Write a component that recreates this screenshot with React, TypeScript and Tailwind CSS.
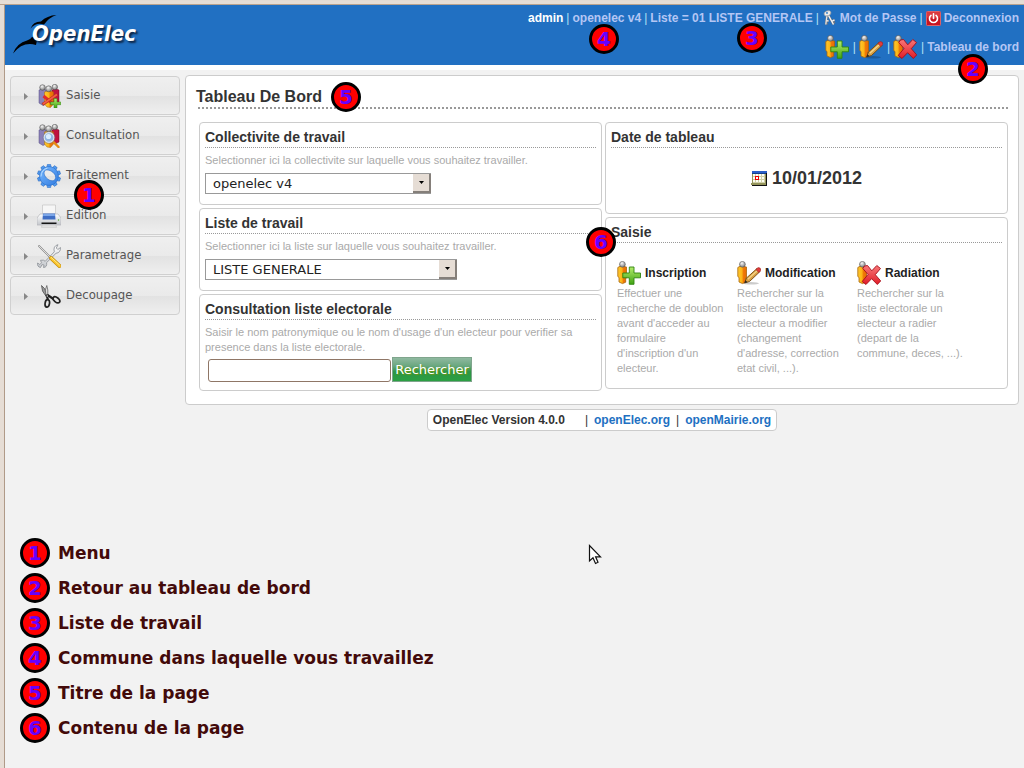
import type { ReactNode } from "react";

const sans = "font-['Liberation_Sans',Arial,sans-serif]";
const dejavu = "font-['DejaVu_Sans',Verdana,sans-serif]";
const condensed = "font-['DejaVu_Sans_Condensed','DejaVu_Sans',sans-serif]";

function Marker({ n, className = "" }: { n: number; className?: string }) {
  return (
    <span
      className={`flex size-[30px] shrink-0 items-center justify-center rounded-full border-[3px] border-black bg-[#ff0000] text-xl leading-none font-bold text-[#6600ff] ${dejavu} ${className}`}
    >
      {n}
    </span>
  );
}

/* ---------- icons ---------- */

function Gradients() {
  return (
    <svg className="absolute size-0" aria-hidden="true">
      <defs>
        <linearGradient id="gold" x1="0" x2="1" y1="0" y2="0">
          <stop offset="0" stopColor="#ffc830" />
          <stop offset="0.5" stopColor="#fbb414" />
          <stop offset="0.6" stopColor="#f07c08" />
          <stop offset="1" stopColor="#e86a04" />
        </linearGradient>
        <radialGradient id="head" cx="0.4" cy="0.3" r="0.8">
          <stop offset="0" stopColor="#f8f8f8" />
          <stop offset="1" stopColor="#6f6f6f" />
        </radialGradient>
        <linearGradient id="green" x1="0" x2="0" y1="0" y2="1">
          <stop offset="0" stopColor="#b4ec6c" />
          <stop offset="1" stopColor="#3fa312" />
        </linearGradient>
        <linearGradient id="red" x1="0" x2="0" y1="0" y2="1">
          <stop offset="0" stopColor="#f87878" />
          <stop offset="1" stopColor="#e01c28" />
        </linearGradient>
        <linearGradient id="blue" x1="0" x2="1" y1="0" y2="1">
          <stop offset="0" stopColor="#7dbcff" />
          <stop offset="1" stopColor="#2f7ae0" />
        </linearGradient>
        <linearGradient id="metal" x1="0" x2="0" y1="0" y2="1">
          <stop offset="0" stopColor="#ffffff" />
          <stop offset="1" stopColor="#c4c7cc" />
        </linearGradient>
      </defs>
    </svg>
  );
}

function Person() {
  return (
    <g>
      <path
        d="M0.800 6.500 L3.500 5 L9.500 6 V17 H8.700 V21.200 L5.500 22.600 L2 21 V16.500 L0.800 15.500 Z"
        fill="url(#gold)"
        stroke="#a8660a"
        strokeWidth="0.8"
      />
      <circle cx="5.400" cy="3.300" r="2.900" fill="url(#head)" stroke="#555" strokeWidth="0.6" />
    </g>
  );
}

function PersonAdd() {
  return (
    <svg className="inline-block size-6" viewBox="0 0 24 24" aria-hidden="true">
      <Person />
      <path
        d="M12.300 6 H17 V12 H23.500 V16.800 H17 V23.300 H12.300 V16.800 H5.800 V12 H12.300 Z"
        fill="url(#green)"
        stroke="#2f8410"
        strokeWidth="0.9"
      />
    </svg>
  );
}

function PersonEdit() {
  return (
    <svg className="inline-block size-6" viewBox="0 0 24 24" aria-hidden="true">
      <ellipse cx="14" cy="22.300" rx="8" ry="1.200" fill="#000" opacity="0.2" />
      <Person />
      <path d="M7.500 22 L9.500 17 L20 7.500 L23 10.500 L12.500 20.500 Z" fill="#d8a044" stroke="#74470f" strokeWidth="0.9" />
      <path d="M10.800 18.300 L21 9" stroke="#f6d78c" strokeWidth="1.200" />
      <path d="M7.500 22 L8.500 19.300 L10.500 21.200 Z" fill="#222" />
      <path d="M18.900 8.600 L21 6.600 Q23.900 6.200 23.900 9.500 L21.900 11.500 Z" fill="#e23b3b" stroke="#8d1a1a" strokeWidth="0.5" />
    </svg>
  );
}

function PersonRemove() {
  return (
    <svg className="inline-block size-6" viewBox="0 0 24 24" aria-hidden="true">
      <Person />
      <path
        d="M7.500 5 L10.500 4.500 L14.800 9.800 L19.800 4.500 L23.500 7.500 L18.300 13.700 L23.700 19.900 L20.300 23.500 L14.600 17.700 L9 23.500 L5.200 20.500 L11 13.500 L5.800 7.500 Z"
        fill="url(#red)"
        stroke="#a60c18"
        strokeWidth="0.9"
      />
    </svg>
  );
}

function People() {
  return (
    <g strokeWidth="0.5">
      <path d="M2 6 L6 4.500 L9 6 V20 L6 21.500 L2 19 Z" fill="#8a80b8" stroke="#554c80" />
      <path d="M15 6 L18 4.500 L22 6 V18 L18 20 L15 18 Z" fill="#c0123f" stroke="#6e0a26" />
      <path d="M7.500 8 L12 6.500 L16.500 8 V20 L13.500 23.500 L10 23 L7.500 20 Z" fill="url(#gold)" stroke="#a8660a" />
      <circle cx="5.500" cy="3.500" r="2.800" fill="url(#head)" stroke="#444" />
      <circle cx="17.800" cy="3" r="2.700" fill="url(#head)" stroke="#444" />
      <circle cx="11.700" cy="4.800" r="3" fill="url(#head)" stroke="#444" />
    </g>
  );
}

function EntryIcon() {
  return (
    <svg className="size-6" viewBox="0 0 24 24" aria-hidden="true">
      <People />
      <path d="M6.500 12 L16 20" stroke="#e02a2a" strokeWidth="3" />
      <path d="M5.500 20.500 L20 10.500" stroke="#b83020" strokeWidth="3.200" />
      <path d="M6 20 L20 10.500" stroke="#f45c44" strokeWidth="1.800" />
      <path d="M17 14.500 H20 V18 H23.800 V20.700 H20 V24 H17 V20.700 H13.500 V18 H17 Z" fill="url(#green)" stroke="#2f8410" strokeWidth="0.500" />
    </svg>
  );
}

function SearchPeopleIcon() {
  return (
    <svg className="size-6" viewBox="0 0 24 24" aria-hidden="true">
      <People />
      <path d="M16.500 18 L21.500 23" stroke="#e58b14" strokeWidth="2.400" strokeLinecap="round" />
      <circle cx="12" cy="13.500" r="5" fill="#8fb6e4" stroke="#e0e6ee" strokeWidth="1.300" />
      <circle cx="11.500" cy="12.500" r="2.600" fill="#dceeff" />
      <circle cx="12" cy="13.500" r="5.900" fill="none" stroke="#687080" strokeWidth="0.500" />
    </svg>
  );
}

function GearIcon() {
  const teeth = [0, 36, 72, 108, 144, 180, 216, 252, 288, 324];
  return (
    <svg className="size-6" viewBox="0 0 24 24" aria-hidden="true">
      <g stroke="#2a6cc4" strokeWidth="0.600">
        {teeth.map((a) => (
          <path key={a} fill="#4f9af0" d="M9.800 4 L10.400 0.400 H13.600 L14.200 4 Z" transform={`rotate(${a} 12 12)`} />
        ))}
        <path
          fillRule="evenodd"
          fill="url(#blue)"
          d="M12 2.600 A9.400 9.400 0 1 1 11.900 2.600 Z M8.600 6.200 C11.500 4.800 18.800 8.500 18.600 13.500 C18.300 18 13 17.500 9.500 14 C7 11.500 6 8 8.600 6.200 Z"
        />
      </g>
      <path d="M4 12.500 Q4.200 5.800 10.500 4" stroke="#b8dcff" strokeWidth="1" fill="none" />
    </svg>
  );
}

function PrinterIcon() {
  return (
    <svg className="size-6" viewBox="0 0 24 24" aria-hidden="true">
      <path d="M5.500 1 H18.500 V11 H5.500 Z" fill="#f6f6f6" stroke="#c4c4c4" strokeWidth="0.700" />
      <path d="M3 10 H21 L24 14 V21 H0 V14 Z" fill="url(#metal)" stroke="#b4b6ba" strokeWidth="0.700" />
      <path d="M6 9.500 H18 L18.500 15.500 H5.500 Z" fill="#3f6ec4" />
      <path d="M6.300 10 H17.700 L17.900 12 H6 Z" fill="#7ba6e8" />
      <path d="M4.500 18.500 H19.500 V20 H4.500 Z" fill="#151515" />
      <path d="M5 21 H19 L19.500 23.300 H4.500 Z" fill="#e4e4e4" stroke="#bbb" strokeWidth="0.500" />
      <circle cx="21.500" cy="16" r="0.700" fill="#55b030" />
    </svg>
  );
}

function ToolsIcon() {
  return (
    <svg className="size-6" viewBox="0 0 24 24" fill="none" aria-hidden="true">
      <path
        d="M3.500 23.500 Q0 22.800 0.600 19 L2.800 20.500 L4.500 18.800 L3.500 16.300 Q7 15.500 8.200 17.300 L17.300 7.800 Q15.800 2 21 0.700 L19.300 4 L20.800 5.500 L23.500 3.500 Q23.700 8.800 19 9.300 L9.600 18.600 Q10.300 23.300 6.500 23.500 L7 21 L5 20.600 Z"
        fill="url(#metal)"
        stroke="#93979d"
        strokeWidth="0.900"
      />
      <path d="M2 2 L13 13" stroke="#8a8a8a" strokeWidth="1.800" strokeLinecap="round" />
      <path d="M2 2 L13 13" stroke="#f2f2f2" strokeWidth="0.800" strokeLinecap="round" />
      <path d="M14 14 L22.500 22" stroke="#c08a08" strokeWidth="3.800" strokeLinecap="round" />
      <path d="M14 14 L22.500 22" stroke="#fbc52c" strokeWidth="2.600" strokeLinecap="round" />
      <path d="M14.300 13.500 L22.500 21" stroke="#fff0a0" strokeWidth="0.800" strokeLinecap="round" />
    </svg>
  );
}

function ScissorsIcon() {
  return (
    <svg className="size-6" viewBox="0 0 24 24" fill="none" aria-hidden="true">
      <path d="M4.500 1.500 L7.500 4.500 L11 12 L9.500 13 L5.500 7 Z" fill="#999" stroke="#444" strokeWidth="0.700" />
      <path d="M9.800 1.500 L10.800 6 L10.800 12.500 L9 12 L8.300 6 Z" fill="#ddd" stroke="#555" strokeWidth="0.700" />
      <path d="M9.500 10.500 L11 16 M10.500 11 L16.500 15" stroke="#222" strokeWidth="2.200" />
      <ellipse cx="10.300" cy="19.400" rx="2.200" ry="3.700" transform="rotate(8 10.300 19.400)" stroke="#222" strokeWidth="1.700" />
      <ellipse cx="19.400" cy="15.800" rx="2.300" ry="3.900" transform="rotate(-52 19.400 15.800)" stroke="#222" strokeWidth="1.700" />
      <circle cx="10.300" cy="12" r="0.800" fill="#ddd" />
    </svg>
  );
}

function KeysIcon() {
  return (
    <svg className="size-4" viewBox="0 0 16 16" fill="none" aria-hidden="true">
      <path d="M6 4.500 L11.500 14.500 M9.500 11.500 L12.500 9.800 M10.500 13.500 L13 12" stroke="#6c7480" strokeWidth="2.200" />
      <path d="M5 5 L3.800 14.500 M4 10.500 L6.800 11 M4 13.300 L6 13.500" stroke="#6c7480" strokeWidth="2.200" />
      <path d="M6 4.500 L11.500 14.500 M9.500 11.500 L12.500 9.800" stroke="#f4f4f4" strokeWidth="1.400" />
      <path d="M5 5 L3.800 14.500 M4 10.500 L6.500 11" stroke="#e4e4e4" strokeWidth="1.300" />
      <ellipse cx="5.500" cy="3.300" rx="3.600" ry="2.500" transform="rotate(-20 5.500 3.300)" fill="#ececec" stroke="#8a8f98" strokeWidth="0.700" />
      <circle cx="5" cy="2.900" r="0.900" fill="#2170c2" />
    </svg>
  );
}

function PowerIcon() {
  return (
    <svg className="size-[15px]" viewBox="0 0 16 16" fill="none" aria-hidden="true">
      <rect x="0.500" y="0.500" width="15" height="15" rx="1" fill="#c81420" stroke="#e86468" />
      <path d="M1 1 H15 V7 Q8 9 1 7 Z" fill="#e2484c" opacity="0.700" />
      <path d="M5.300 4.700 A4.300 4.300 0 1 0 10.700 4.700 M8 3 V8" stroke="#fff" strokeWidth="1.700" strokeLinecap="round" />
    </svg>
  );
}

function CalendarIcon() {
  return (
    <svg className="h-[15px] w-4" viewBox="0 0 16 15" shapeRendering="crispEdges" aria-hidden="true">
      <path d="M1 1 H16 V15 H1 Z" fill="#111" />
      <path d="M1 1 H15 V14 H0 V12 H1 Z" fill="#94945a" />
      <path d="M1 0 H16 V2 H1 Z" fill="#2a5fc8" />
      <path d="M1 2 H15 V3 H1 Z" fill="#16408c" />
      <path d="M2 3 H14 V12 H2 Z" fill="#d0d0a8" />
      <path
        d="M2 3 H4 V5 H2 Z M5 3 H7 V5 H5 Z M8 3 H10 V5 H8 Z M11 3 H13 V5 H11 Z M2 6 H4 V8 H2 Z M8 6 H10 V8 H8 Z M11 6 H13 V8 H11 Z M2 9 H4 V11 H2 Z M5 9 H7 V11 H5 Z M8 9 H10 V11 H8 Z M11 9 H13 V11 H11 Z"
        fill="#fffff4"
      />
      <path d="M4 5 H8 V9 H4 Z" fill="#f00000" />
      <path d="M5 6 H7 V8 H5 Z" fill="#fff" />
    </svg>
  );
}

function Pointer() {
  return (
    <svg className="absolute top-[544px] left-[588px] h-[21px] w-[14px]" viewBox="0 0 14 21" aria-hidden="true">
      <path d="M1.500 1.500 V17 L5 13.800 L7.500 19.500 L10 18.300 L7.600 12.800 H12.500 Z" fill="#fff" stroke="#111" strokeWidth="1.200" />
    </svg>
  );
}

function Logo() {
  return (
    <a href="#accueil" className="relative mt-[5px] ml-[7px] block h-11 w-32">
      <svg className="absolute inset-0 h-11 w-14" viewBox="0 0 56 44" aria-hidden="true">
        <path d="M18.500 18.500 Q21 11.500 29 11.500 Q35 5.500 44.500 5 Q37 7.500 32 14.500 Q24 12 18.500 18.500 Z" fill="#000" />
        <path d="M1 43.500 Q5 33 15 30.500 Q18 30 20 27 L26 26 L24 35 Q11 31 1 43.500 Z" fill="#000" />
      </svg>
      <span
        className={`absolute top-3 left-5 text-[22px] leading-6 font-bold text-white italic [text-shadow:2px_2px_2px_#0c2444] ${condensed}`}
      >
        OpenElec
      </span>
    </a>
  );
}

/* ---------- page parts ---------- */

function Bar() {
  return <span className="font-normal text-[#b4e2f4]">|</span>;
}

function Header() {
  return (
    <header className="relative flex h-[65px] justify-between border-b-[5px] border-white bg-[#2170c2]">
      <Logo />
      <div className={`flex flex-col items-end pr-[5px] text-xs font-bold text-[#b4c6f4] ${sans}`}>
        <div className="flex h-[26px] items-center gap-[3px] whitespace-nowrap">
          <span className="text-white">admin</span>
          <Bar />
          <a href="#commune">openelec v4</a>
          <Bar />
          <a href="#liste-de-travail">Liste = 01 LISTE GENERALE</a>
          <Bar />
          <a href="#mot-de-passe" className="flex items-center gap-[2px]">
            <KeysIcon />
            Mot de Passe
          </a>
          <Bar />
          <a href="#deconnexion" className="flex items-center gap-[3px]">
            <PowerIcon />
            Deconnexion
          </a>
        </div>
        <nav className="mt-1 flex h-6 items-center gap-[3px] whitespace-nowrap" aria-label="Raccourcis">
          <a href="#inscription" aria-label="Inscription" className="mr-px flex">
            <PersonAdd />
          </a>
          <Bar />
          <a href="#modification" aria-label="Modification" className="mr-px flex">
            <PersonEdit />
          </a>
          <Bar />
          <a href="#radiation" aria-label="Radiation" className="mr-px flex">
            <PersonRemove />
          </a>
          <Bar />
          <a href="#tableau-de-bord">Tableau de bord</a>
        </nav>
      </div>
      <Marker n={4} className="absolute top-[19px] right-[405px]" />
      <Marker n={3} className="absolute top-[18px] right-[257px]" />
      <Marker n={2} className="absolute top-[49px] right-[36px]" />
    </header>
  );
}

const menu: { label: string; icon: ReactNode }[] = [
  { label: "Saisie", icon: <EntryIcon /> },
  { label: "Consultation", icon: <SearchPeopleIcon /> },
  { label: "Traitement", icon: <GearIcon /> },
  { label: "Edition", icon: <PrinterIcon /> },
  { label: "Parametrage", icon: <ToolsIcon /> },
  { label: "Decoupage", icon: <ScissorsIcon /> },
];

function Menu() {
  return (
    <nav className="relative mt-px flex w-[170px] shrink-0 flex-col gap-px" aria-label="Menu">
      {menu.map((m) => (
        <button
          key={m.label}
          type="button"
          className={`flex h-[39px] items-center rounded border border-[#d0d0d0] bg-[linear-gradient(#efefef,#eaeaea_50%,#e2e2e2_52%,#efefef)] pl-[13px] text-left text-[13px] text-[#555] ${condensed}`}
        >
          <svg className="mt-[2px] mr-[9px] h-[7px] w-1" viewBox="0 0 4 7" aria-hidden="true">
            <path d="M0 0 L4 3.500 L0 7 Z" fill="#888" />
          </svg>
          {m.icon}
          <span className="pb-px pl-[5px]">{m.label}</span>
        </button>
      ))}
      <Marker n={1} className="absolute top-[104px] left-[64px]" />
    </nav>
  );
}

function Card({ title, className = "", children }: { title: string; className?: string; children: ReactNode }) {
  return (
    <section className={`rounded border border-[#ccc] bg-white px-[5px] pt-1 ${className}`}>
      <h2 className="border-b border-dotted border-[#999] text-sm leading-5 font-bold text-[#333]">{title}</h2>
      {children}
    </section>
  );
}

function Select({ id, value, width }: { id: string; value: string; width: string }) {
  return (
    <div className={`relative mt-[5px] h-[21px] ${width}`}>
      <select
        id={id}
        defaultValue={value}
        className={`block h-full w-full appearance-none border border-[#999] bg-white pl-[7px] text-[13px] leading-[19px] text-[#222] ${dejavu}`}
      >
        <option>{value}</option>
      </select>
      <span className="pointer-events-none absolute inset-y-px right-0 flex w-[18px] items-center justify-center border-r-2 border-b-2 border-[#857f7a] bg-[#e6ddd5]">
        <svg className="h-[3px] w-[5px]" viewBox="0 0 5 3" aria-hidden="true">
          <path d="M0 0 H5 L2.500 3 Z" fill="#000" />
        </svg>
      </span>
    </div>
  );
}

const actions: { title: string; icon: ReactNode; text: string }[] = [
  {
    title: "Inscription",
    icon: <PersonAdd />,
    text: "Effectuer une recherche de doublon avant d'acceder au formulaire d'inscription d'un electeur.",
  },
  {
    title: "Modification",
    icon: <PersonEdit />,
    text: "Rechercher sur la liste electorale un electeur a modifier (changement d'adresse, correction etat civil, ...).",
  },
  {
    title: "Radiation",
    icon: <PersonRemove />,
    text: "Rechercher sur la liste electorale un electeur a radier (depart de la commune, deces, ...).",
  },
];

function Dashboard() {
  const hint = "mt-[5px] block text-[11px] leading-[15px] text-[#aaa]";
  return (
    <main className="rounded border border-[#ccc] bg-white px-[10px] pt-[11px] pb-[13px]">
      <div className="flex h-5 items-center gap-[9px]">
        <h1 className="text-base leading-5 font-bold text-[#333]">Tableau De Bord</h1>
        <Marker n={5} className="relative" />
      </div>
      <div className="ml-[2px] border-b-2 border-dotted border-[#999]" />
      <div className="mt-[13px] ml-[3px] grid grid-cols-2 items-start gap-[3px]">
        <div className="flex flex-col gap-[3px]">
          <Card title="Collectivite de travail" className="pb-[10px]">
            <label htmlFor="collectivite" className={hint}>
              Selectionner ici la collectivite sur laquelle vous souhaitez travailler.
            </label>
            <Select id="collectivite" value="openelec v4" width="w-[226px]" />
          </Card>
          <Card title="Liste de travail" className="pb-[10px]">
            <label htmlFor="liste" className={hint}>
              Selectionner ici la liste sur laquelle vous souhaitez travailler.
            </label>
            <Select id="liste" value="LISTE GENERALE" width="w-[252px]" />
          </Card>
          <Card title="Consultation liste electorale" className="pb-2">
            <label htmlFor="nom" className={hint}>
              Saisir le nom patronymique ou le nom d'usage d'un electeur pour verifier sa presence dans la liste
              electorale.
            </label>
            <div className="mt-[2px] ml-[3px] flex items-end gap-px">
              <input id="nom" type="text" className="h-[23px] w-[183px] rounded-[3px] border border-[#8f7666] bg-white px-1" />
              <button
                type="button"
                className={`h-[25px] w-20 border border-[#7fa58c] bg-[linear-gradient(#8fb9a0,#6aa77f_35%,#2c9546_60%,#2ba042)] text-[13px] leading-none text-white [text-shadow:1px_1px_1px_#6f9a10] ${dejavu}`}
              >
                Rechercher
              </button>
            </div>
          </Card>
        </div>
        <div className="flex flex-col gap-[3px]">
          <Card title="Date de tableau" className="h-[92px]">
            <p className="mt-[18px] flex items-center justify-center gap-[5px] text-lg leading-6 font-bold text-[#333]">
              <CalendarIcon />
              10/01/2012
            </p>
          </Card>
          <Card title="Saisie" className="relative pb-3">
            <div className="mt-[17px] grid grid-cols-[repeat(3,120px)] pl-[6px]">
              {actions.map((a) => (
                <div key={a.title} className="w-[108px]">
                  <a
                    href={`#${a.title.toLowerCase()}`}
                    className="flex items-center gap-1 text-xs leading-[26px] font-bold text-[#222]"
                  >
                    {a.icon}
                    {a.title}
                  </a>
                  <p className="text-[11px] leading-[15px] text-[#aaa]">{a.text}</p>
                </div>
              ))}
            </div>
            <Marker n={6} className="absolute top-[9px] -left-5" />
          </Card>
        </div>
      </div>
    </main>
  );
}

function Footer() {
  return (
    <footer className="mx-auto mt-1 flex h-[22px] w-fit items-center rounded border border-[#ccc] bg-white px-[5px] text-xs font-bold text-[#333]">
      <span className="mr-5">OpenElec Version 4.0.0</span>
      <span className="mr-[6px] font-normal">|</span>
      <a href="#openelec" className="text-[#2170c2]">
        openElec.org
      </a>
      <span className="mx-[6px] font-normal">|</span>
      <a href="#openmairie" className="text-[#2170c2]">
        openMairie.org
      </a>
    </footer>
  );
}

const legend = [
  "Menu",
  "Retour au tableau de bord",
  "Liste de travail",
  "Commune dans laquelle vous travaillez",
  "Titre de la page",
  "Contenu de la page",
];

export default function App() {
  return (
    <div className="relative flex min-h-screen flex-col bg-[#f2f2f2]">
      <Gradients />
      <div className="h-[5px] border-t border-b border-t-[#e3dbd3] border-b-[#b8a28e] bg-[#e6ddd5]" />
      <div className="ml-1 flex grow flex-col border-l border-[#b09a88] shadow-[-4px_0_0_#e6ddd5]">
        <Header />
        <div className="flex gap-[5px] px-[5px] pt-[5px]">
          <Menu />
          <div className={`min-w-0 grow ${sans}`}>
            <Dashboard />
            <Footer />
          </div>
        </div>
        <ol className="mt-[107px] flex flex-col gap-[5px] pb-6 pl-[15px]">
          {legend.map((text, i) => (
            <li key={text} className={`flex items-center gap-2 text-[17px] leading-6 font-bold text-[#430a0a] ${dejavu}`}>
              <Marker n={i + 1} />
              {text}
            </li>
          ))}
        </ol>
      </div>
      <Pointer />
    </div>
  );
}
